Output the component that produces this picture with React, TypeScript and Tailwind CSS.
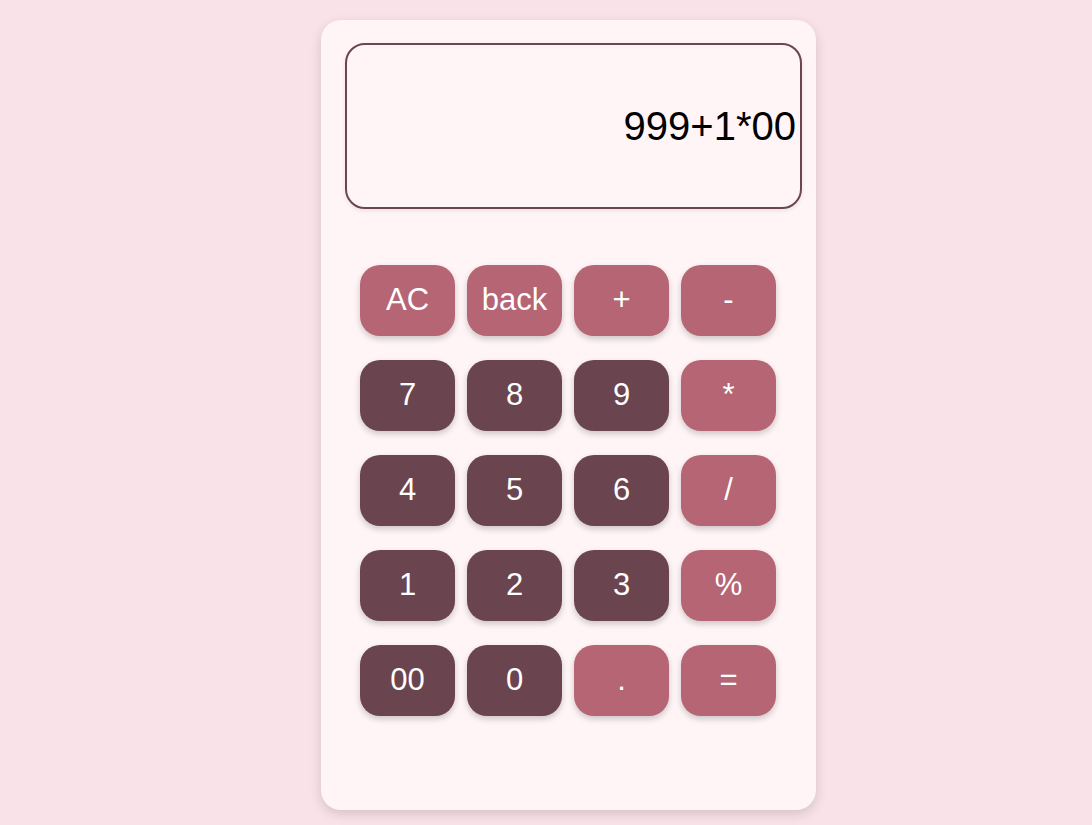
import React, { useState } from 'react';

const keys: { label: string; light: boolean }[] = [
  { label: 'AC', light: true },
  { label: 'back', light: true },
  { label: '+', light: true },
  { label: '-', light: true },
  { label: '7', light: false },
  { label: '8', light: false },
  { label: '9', light: false },
  { label: '*', light: true },
  { label: '4', light: false },
  { label: '5', light: false },
  { label: '6', light: false },
  { label: '/', light: true },
  { label: '1', light: false },
  { label: '2', light: false },
  { label: '3', light: false },
  { label: '%', light: true },
  { label: '00', light: false },
  { label: '0', light: false },
  { label: '.', light: true },
  { label: '=', light: true },
];

export default function App() {
  const [value, setValue] = useState('999+1*00');

  const press = (k: string) => {
    if (k === 'AC') return setValue('');
    if (k === 'back') return setValue((v) => v.slice(0, -1));
    if (k === '=') {
      try {
        // eslint-disable-next-line no-new-func
        setValue(String(Function(`return (${value})`)()));
      } catch {
        setValue('Error');
      }
      return;
    }
    setValue((v) => v + k);
  };

  return (
    <div className="min-h-screen w-full bg-[#f9e3e8] flex justify-center pl-[45px] pt-5 font-['Liberation_Sans',Arial,sans-serif]">
      <div className="w-[495px] h-[790px] bg-[#fff5f6] rounded-[20px] shadow-[0_4px_12px_rgba(0,0,0,0.15)] pt-[23px]">
        {/* Display */}
        <div className="ml-6 w-[457px] h-[166px] border-2 border-[#6b4551] rounded-[20px] flex items-center justify-end pr-1 shadow-[0_2px_4px_rgba(0,0,0,0.08)]">
          <span className="text-[40px] leading-none text-black">{value}</span>
        </div>

        {/* Keys */}
        <div className="mt-[56px] ml-[39px] grid grid-cols-[repeat(4,95px)] gap-x-3 gap-y-6">
          {keys.map((k) => (
            <button
              key={k.label}
              onClick={() => press(k.label)}
              className={`h-[71px] rounded-[20px] text-white text-[31px] flex items-center justify-center shadow-[0_3px_6px_rgba(0,0,0,0.2)] ${
                k.light ? 'bg-[#b56574]' : 'bg-[#6a4550]'
              }`}
            >
              {k.label}
            </button>
          ))}
        </div>
      </div>
    </div>
  );
}
